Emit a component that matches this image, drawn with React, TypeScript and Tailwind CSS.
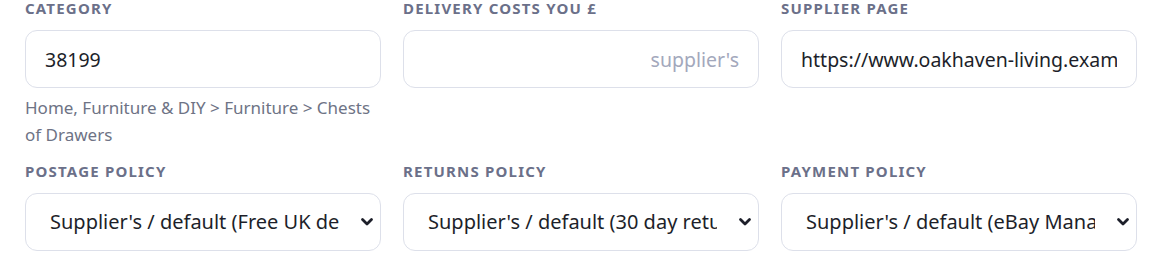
import React from 'react'

// Listing settings: category, delivery cost, supplier page + policy selects
const POLICIES = [
  { label: 'Postage policy', value: "Supplier's / default (Free UK delivery)" },
  { label: 'Returns policy', value: "Supplier's / default (30 day returns)" },
  { label: 'Payment policy', value: "Supplier's / default (eBay Managed Payments)" },
]

const font = { fontFamily: '"Noto Sans", "Open Sans", Arial, sans-serif' }

function Label({ children }: { children: React.ReactNode }) {
  return (
    <label className="block mb-[14px] text-[15px] leading-4 font-bold uppercase tracking-[0.08em] text-[#6b7089]">
      {children}
    </label>
  )
}

const inputCls =
  'w-full h-[58px] px-[19px] rounded-xl border border-[#dde0ea] bg-white text-[19.5px] text-[#1d1f2a] outline-none placeholder:text-[#a3a8bc]'

export default function App() {
  return (
    <div className="bg-white w-[1150px] h-[258px] pl-[25px]" style={font}>
      <div className="grid grid-cols-[356px_356px_356px] gap-x-[22px] gap-y-[15px]">
        {/* ── Row 1 ───────────────────────────────────────── */}
        <div className="flex flex-col">
          <Label>Category</Label>
          <input className={inputCls} defaultValue="38199" />
          <p className="mt-[6px] text-[17px] leading-[27px] text-[#6e7385]">
            Home, Furniture &amp; DIY &gt; Furniture &gt; Chests of Drawers
          </p>
        </div>
        <div className="flex flex-col">
          <Label>Delivery costs you £</Label>
          <input className={`${inputCls} text-right`} placeholder="supplier's" />
        </div>
        <div className="flex flex-col">
          <Label>Supplier page</Label>
          <input
            className={inputCls}
            defaultValue="https://www.oakhaven-living.example.co.uk/products/chest-of-drawers"
          />
        </div>

        {/* ── Row 2: policies ─────────────────────────────── */}
        {POLICIES.map((p) => (
          <div key={p.label} className="flex flex-col">
            <Label>{p.label}</Label>
            <div className="relative">
              <select
                className="w-full h-[58px] pl-[24px] pr-[41px] rounded-xl border border-[#dde0ea] bg-white text-[20px] text-[#1d1f2a] outline-none appearance-none"
                defaultValue={p.value}
              >
                <option value={p.value}>{p.value}</option>
              </select>
              <svg
                className="absolute right-[4px] top-1/2 -translate-y-1/2 pointer-events-none"
                width="20"
                height="20"
                viewBox="0 0 20 20"
                fill="none"
              >
                <path d="M5.5 7.5 10 12l4.5-4.5" stroke="#1d1f2a" strokeWidth="2.8" strokeLinecap="round" strokeLinejoin="round" />
              </svg>
            </div>
          </div>
        ))}
      </div>
    </div>
  )
}
